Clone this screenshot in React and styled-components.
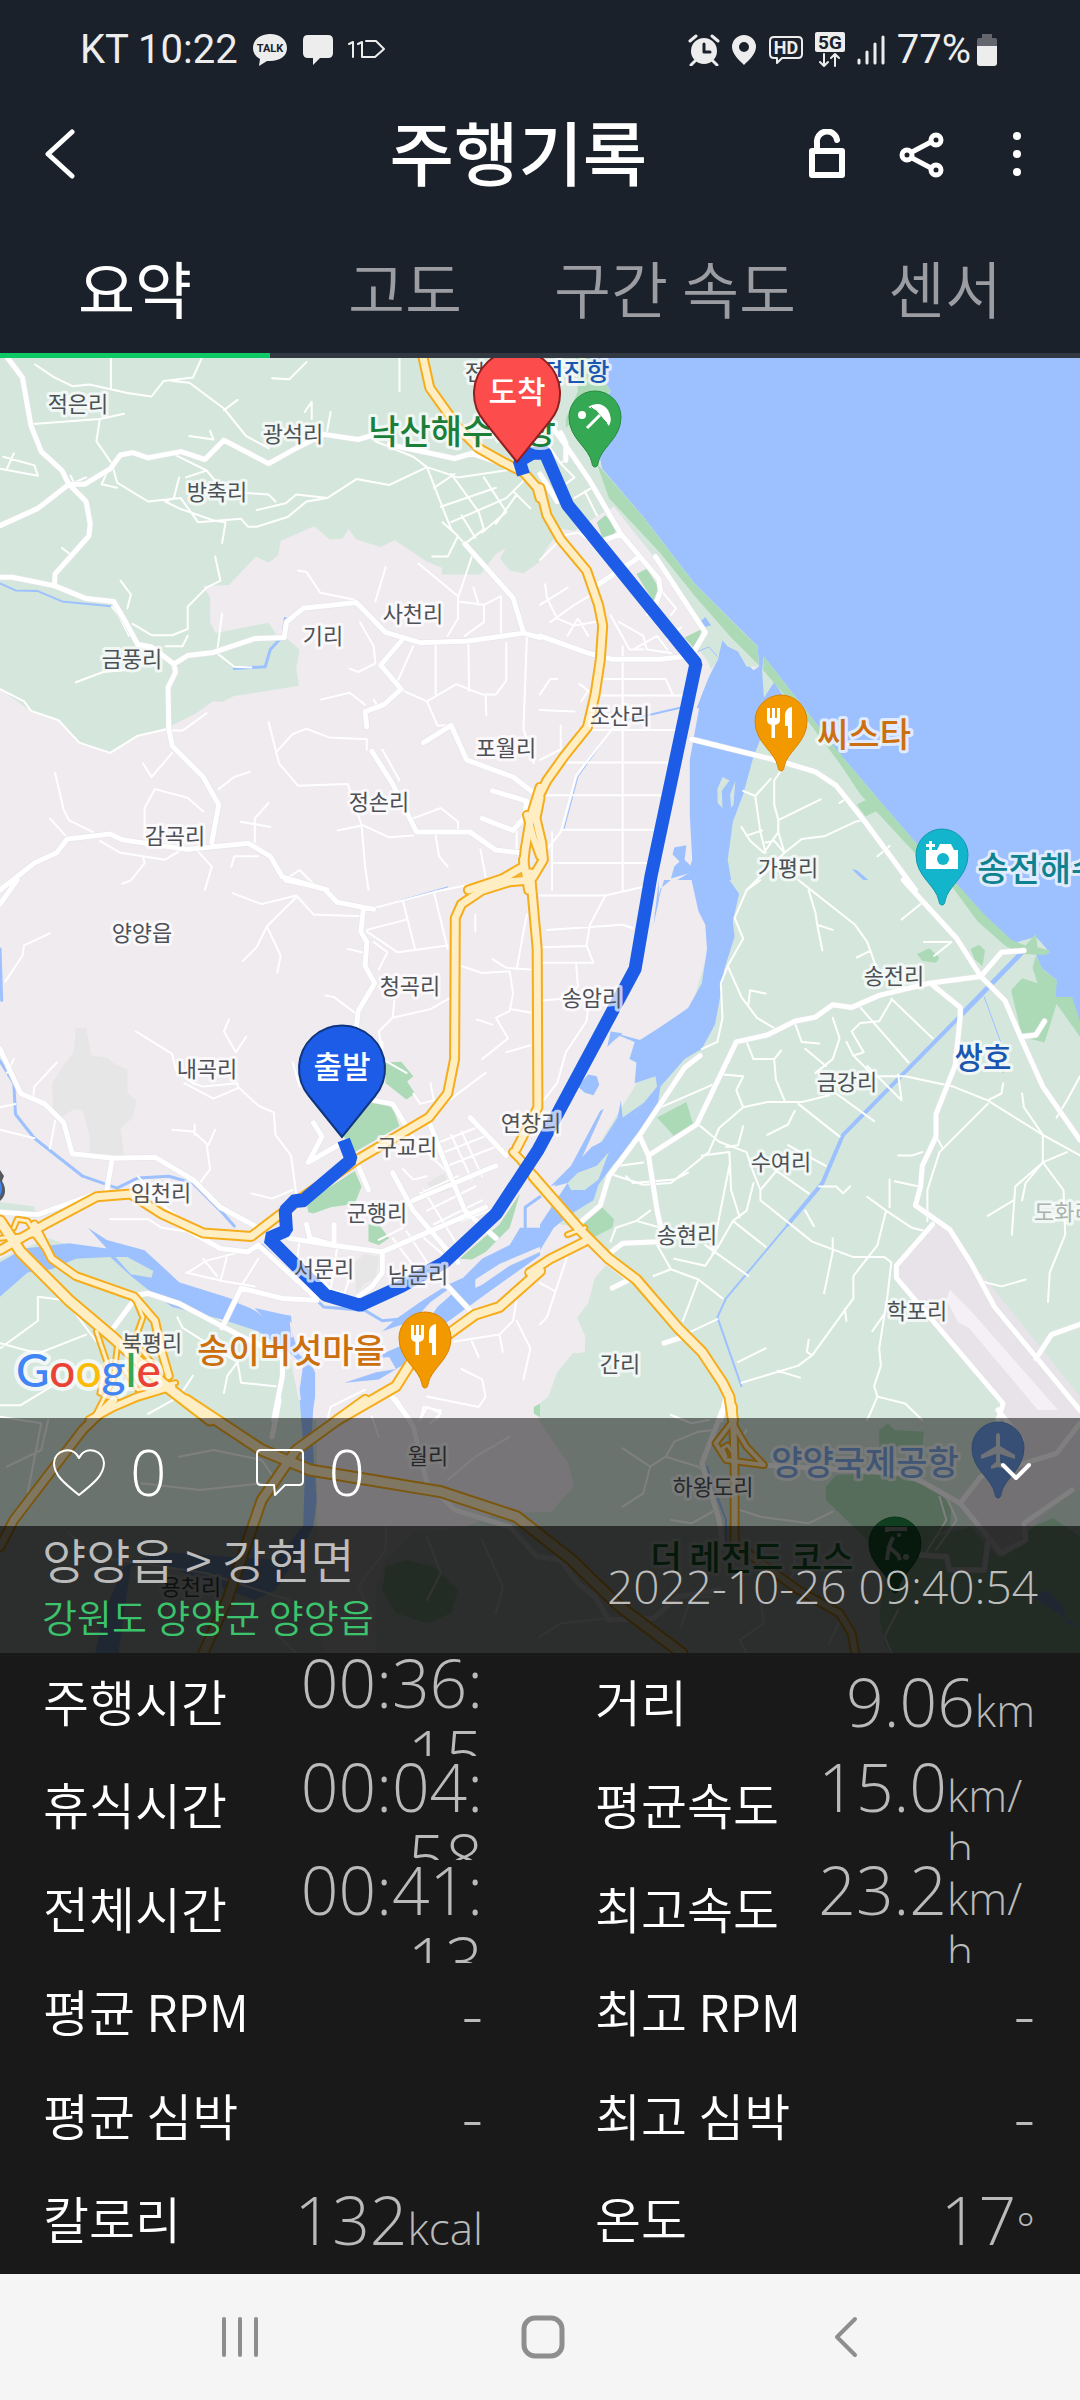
import React from "react";
import styled, { createGlobalStyle } from "styled-components";

const GlobalStyle = createGlobalStyle`
  *, *::before, *::after { box-sizing: border-box; }
  body {
    margin: 0;
    background: #191919;
    font-family: "Noto Sans CJK KR", "Noto Sans", sans-serif;
  }
  button { font: inherit; color: inherit; background: none; border: 0; padding: 0; cursor: pointer; }
`;

const DIGITS = `"Open Sans", "Noto Sans CJK KR", sans-serif`;

const Screen = styled.div`
  min-height: 100vh;
  display: flex;
  flex-direction: column;
  color: #fff;
`;

const Header = styled.header`
  background: #1b212b;
`;

const StatusBar = styled.div`
  height: 100px;
  padding: 0 82px 0 80px;
  display: flex;
  align-items: center;
  justify-content: space-between;
  font-family: Roboto, sans-serif;
  font-size: 40px;
  line-height: 48px;
  color: #ededed;
`;

const StatusGroup = styled.div`
  display: flex;
  align-items: center;
  gap: ${(p) => p.$gap}px;
`;

const TitleBar = styled.div`
  height: 108px;
  display: grid;
  grid-template-columns: 24% 1fr 28%;
  align-items: center;
`;

const Title = styled.h1`
  margin: 0;
  padding-bottom: 6px;
  text-align: center;
  font-size: 70px;
  font-weight: 500;
  line-height: 96px;
  white-space: nowrap;
`;

const IconButton = styled.button`
  width: ${(p) => p.$width}px;
  height: 96px;
  display: grid;
  place-items: center;
`;

const Actions = styled.div`
  display: flex;
  justify-content: flex-end;
  padding-right: 16px;
`;

const Tabs = styled.nav`
  display: grid;
  grid-template-columns: repeat(4, 1fr);
`;

const Tab = styled.button`
  && {
    height: 150px;
    padding-top: 12px;
    font-size: 62px;
    font-weight: ${(p) => (p.$active ? 400 : 350)};
    line-height: 80px;
    white-space: nowrap;
    color: ${(p) => (p.$active ? "#fff" : "#9b9da2")};
    border-bottom: 5px solid ${(p) => (p.$active ? "#0ec965" : "#323842")};
  }
`;

const MapArea = styled.section`
  position: relative;
  display: flex;
  flex-direction: column;
  background: #d5e7dd;
`;

const MapDrawing = styled.svg`
  display: block;
  width: 100%;
  height: auto;
`;

const MapFooter = styled.div`
  position: absolute;
  left: 0;
  right: 0;
  bottom: 0;
`;

const SocialBar = styled.div`
  height: 108px;
  padding: 0 36px 0 52px;
  display: flex;
  align-items: center;
  justify-content: space-between;
  background: rgba(0, 0, 0, 0.5);
`;

const SocialGroup = styled.div`
  display: flex;
  gap: 88px;
`;

const SocialButton = styled.button`
  && {
    display: flex;
    align-items: center;
    gap: 24px;
    font-family: ${DIGITS};
    font-size: 64px;
    font-weight: 300;
    line-height: 72px;
  }
`;

const RideBar = styled.div`
  height: 127px;
  padding: 0 42px 8px;
  display: flex;
  align-items: center;
  justify-content: space-between;
  background: rgba(0, 0, 0, 0.8);
`;

const RideName = styled.div`
  font-size: 48px;
  font-weight: 350;
  line-height: 60px;
  color: #bcbcbc;
`;

const RidePlace = styled.div`
  font-size: 38px;
  font-weight: 350;
  line-height: 56px;
  color: #3cc46c;
`;

const RideDate = styled.time`
  font-family: ${DIGITS};
  font-size: 46px;
  font-weight: 300;
  color: #bcbcbc;
`;

const Stats = styled.dl`
  flex: 1;
  margin: 0;
  padding: 0 45px 0 43px;
  display: grid;
  grid-template-columns: 1fr 1fr;
  column-gap: 112px;
  align-content: space-between;
  background: #191919;
`;

const Stat = styled.div`
  height: 103px;
  display: flex;
  align-items: center;
  justify-content: space-between;
  overflow: hidden;
`;

const StatLabel = styled.dt`
  padding-bottom: 10px;
  font-size: 50px;
  font-weight: 350;
  line-height: 72px;
  white-space: nowrap;
`;

const StatValue = styled.dd`
  margin: -6px 0 0;
  display: flex;
  align-items: baseline;
  align-self: ${(p) => (p.$wraps ? "flex-start" : "center")};
  font-family: ${DIGITS};
  font-weight: 300;
  color: #bababa;
`;

const Amount = styled.span`
  flex-shrink: 0;
  max-width: 200px;
  font-size: 66px;
  line-height: 71px;
  text-align: right;
  overflow-wrap: anywhere;
`;

const Unit = styled.span`
  max-width: 88px;
  font-size: 44px;
  line-height: 53px;
  overflow-wrap: anywhere;
`;

const SystemNav = styled.nav`
  height: 126px;
  padding: 0 82px 0 88px;
  display: grid;
  grid-template-columns: repeat(3, 1fr);
  background: #f5f5f5;
`;

const SystemButton = styled.button`
  display: grid;
  place-items: center;
`;

/* ---------- map data ---------- */

const K = 0.34439;
const SHEETS = {
  nw: [0, 350, K, K],
  ne: [540, 350, K, K],
  sw: [0, 880, K, K],
  se: [540, 880, K, K],
  s: [0, 1400, 0.68878, 1 / 3],
  sr: [540, 1410, K, 1 / 3],
};

const project = (sheet, points, close) => {
  const [ox, oy, sx, sy] = SHEETS[sheet];
  const d = points
    .trim()
    .split(/\s+/)
    .map((pair) => {
      const [x, y] = pair.split(",").map(Number);
      return `${(ox + x * sx).toFixed(1)} ${(oy + y * sy).toFixed(1)}`;
    })
    .join("L");
  return `M${d}${close ? "Z" : ""}`;
};

const LAND = "#efebef";
const MEADOW = "#d5e7dd";
const PARK = "#acdab6";
const WATER = "#9dc1ff";
const GREY = "#e6e6e6";
const APRON = "#e7e3e8";

const AREAS = [
  [MEADOW, "nw", "0,20 1568,20 1568,615 1520,648 1480,640 1452,605 1468,575 1440,592 1395,652 1283,652 1283,632 1240,615 1146,552 1105,572 1035,550 1012,520 995,548 958,550 912,512 815,555 808,595 780,618 743,600 665,682 590,685 610,718 610,790 625,822 780,792 815,845 830,835 870,870 860,925 868,975 680,1005 645,1022 618,1020 570,1055 490,1095 400,1120 320,1170 230,1140 170,1075 85,1045 0,985"],
  [WATER, "ne", "0,20 1568,20 1568,1568 0,1568"],
  [LAND, "ne", "0,20 140,20 205,120 150,200 180,345 300,485 450,680 600,830 632,860 635,920 620,930 590,900 575,875 545,860 530,842 520,850 518,895 490,950 470,1000 455,1040 462,1040 435,1190 435,1350 442,1480 430,1520 350,1568 0,1568"],
  [MEADOW, "ne", "0,20 140,20 205,120 150,200 180,345 300,485 450,680 632,860 635,920 600,920 575,875 545,860 530,842 516,900 497,928 485,900 460,870 475,815 440,760 330,600 215,455 170,480 100,525 60,520 20,575 0,610"],
  [PARK, "ne", "165,330 300,485 450,680 600,830 632,860 635,915 555,835 450,715 350,590 200,430"],
  [PARK, "ne", "105,20 140,20 205,120 150,170 75,225 75,200 110,120"],
  [PARK, "ne", "280,650 310,635 345,690 330,730"],
  [PARK, "ne", "420,835 470,810 450,870"],
  [PARK, "ne", "165,500 190,480 225,520 210,540 185,555"],
  [MEADOW, "ne", "650,890 760,1030 860,1160 970,1290 1090,1430 1230,1568 560,1568 545,1480 560,1370 590,1290 620,1180 640,1130 710,1010 680,965 650,1010 645,930"],
  [PARK, "ne", "650,890 760,1030 860,1160 970,1290 1090,1430 1230,1568 1190,1568 1060,1430 930,1290 870,1200 780,1080 700,990 648,930"],
  [PARK, "ne", "920,1320 960,1300 985,1335 945,1355"],
  [WATER, "ne", "640,1060 660,1010 700,1000 700,1080 650,1120"],
  [MEADOW, "ne", "515,1275 530,1240 550,1250 528,1280 530,1330 516,1315"],
  [MEADOW, "ne", "555,1330 552,1290 567,1252 562,1320"],
  [WATER, "ne", "465,790 480,775 497,800 475,805"],
  [WATER, "ne", "905,1508 920,1510 960,1545 950,1550"],
  [WATER, "ne", "390,1445 425,1438 420,1480 440,1500 430,1520 380,1535 390,1500 405,1485 385,1465"],

  [LAND, "se", "0,0 490,0 490,200 440,370 300,560 150,800 30,950 60,1000 130,1010 200,1110 160,1155 140,1230 108,1272 132,1325 130,1372 95,1375 50,1430 25,1500 0,1520"],
  [MEADOW, "se", "450,0 1568,0 1568,1568 0,1568 0,1520 25,1500 50,1430 95,1375 130,1372 132,1325 108,1272 140,1230 160,1155 200,1110 100,990 200,850 340,660 470,490 520,300 490,120"],
  [WATER, "se", "360,0 550,0 578,40 560,120 565,165 535,260 525,330 508,420 470,490 420,520 350,600 340,660 290,740 210,830 170,885 155,930 90,970 40,1010 0,1075 0,1000 80,880 40,890 150,775 180,760 275,680 340,600 335,570 275,590 280,530 260,520 275,470 200,440 290,465 345,430 430,372 470,300 485,200 480,130 460,90 440,0 380,0 350,25 330,110"],
  [WATER, "se", "345,0 330,130 345,60"],
  [WATER, "se", "110,600 140,565 165,570 172,595 155,625 130,618"],
  [WATER, "se", "30,890 90,830 175,670 185,665 120,810 180,760 225,690 235,640 240,690 305,645 240,720 130,850"],
  [WATER, "se", "195,485 205,440 240,445 210,470"],
  [MEADOW, "se", "80,880 110,850 165,830 200,790 170,870 130,900 90,900"],
  [WATER, "se", "1195,0 1568,0 1568,410 1530,395 1495,340 1500,290 1455,255 1440,215 1480,210 1440,165 1370,185 1280,100"],
  [PARK, "se", "1190,10 1210,10 1290,100 1370,175 1410,190 1440,155 1445,195 1480,205 1470,218 1400,215 1350,190 1270,120"],
  [PARK, "se", "1368,320 1400,285 1445,300 1430,255 1440,220 1460,260 1500,290 1498,340 1545,340 1568,410 1568,455 1500,360 1465,472 1400,455"],
  [PARK, "se", "340,690 425,645 445,710 390,745"],
  [PARK, "se", "125,1000 180,950 215,985 210,1010 150,1040"],
  [PARK, "se", "1095,215 1130,198 1160,225 1150,240 1110,235"],
  [PARK, "se", "1250,200 1275,188 1292,205 1285,250 1262,230"],
  [APRON, "se", "1140,1000 1180,1005 1230,1080 1568,1500 1568,1568 1370,1568 1340,1510 1035,1150 1040,1115"],
  ["#f5f0f5", "se", "1190,1190 1180,1220 1215,1285 1245,1300 1470,1568 1530,1568 1250,1250"],

  [MEADOW, "sw", "0,935 100,948 100,970 0,968"],
  [MEADOW, "sw", "140,1040 200,1060 310,1070 430,1150 500,1180 640,1280 740,1290 830,1330 880,1568 0,1568 0,1100"],
  [WATER, "sw", "0,1110 70,1070 200,1055 310,1070 255,1010 310,1045 420,1075 490,1140 520,1168 670,1215 740,1250 845,1265 850,1320 870,1380 900,1400 915,1430 915,1500 905,1568 880,1568 870,1480 880,1410 850,1380 750,1310 640,1275 500,1240 430,1190 380,1150 320,1095 220,1100 150,1130 80,1140 0,1210"],
  [MEADOW, "sw", "335,1095 370,1095 445,1135 440,1155 380,1145"],
  [LAND, "sw", "670,1222 735,1245 790,1290 850,1330 850,1290 830,1268 740,1240"],
  [WATER, "sw", "740,1243 840,1265 845,1325 790,1300"],
  [WATER, "sw", "1568,1010 1568,1090 1400,1210 1290,1290 1200,1280 1110,1310 1150,1275 1220,1225 1300,1175 1345,1155 1400,1100 1480,1060 1510,1010"],
  [LAND, "sw", "1380,1160 1450,1115 1568,1065 1568,1080 1480,1120 1400,1175 1380,1185"],
  [LAND, "sw", "1200,1280 1250,1225 1300,1190 1315,1200 1270,1240 1240,1285"],
  [WATER, "sw", "1000,1460 1090,1430 1150,1420 1130,1385 1080,1390 1180,1345 1220,1320 1200,1390 1100,1450"],
  [PARK, "sw", "1118,530 1165,528 1200,570 1182,585 1205,620 1180,637 1120,590"],
  [PARK, "sw", "1030,790 1160,715 1140,660 1080,645 995,740"],
  [PARK, "sw", "895,965 890,935 1030,845 1050,890 1030,940 960,950 910,968"],
  [PARK, "sw", "1070,1000 1100,1000 1130,1040 1100,1060 1070,1050"],
  [PARK, "sw", "1335,1100 1380,1060 1450,1000 1510,910 1480,1010 1410,1080 1370,1102"],
  [PARK, "sw", "1550,1530 1568,1520 1568,1560 1550,1550"],
  [GREY, "sw", "220,430 250,430 265,510 310,515 325,530 370,550 370,620 397,640 385,690 350,720 360,800 260,795 260,740 240,670 215,665 180,688 155,680 152,590 190,530 215,500"],
  [GREY, "sw", "1030,1110 1060,1085 1100,1095 1090,1160 1060,1170 1035,1200"],
  [GREY, "sw", "1240,880 1290,850 1305,900 1255,915"],

  [LAND, "s", "460,50 775,40 825,190 833,260 800,335 720,340 680,378 600,400 560,480 545,560 545,760 470,760 460,378"],
  [WATER, "s", "435,0 455,0 453,100 460,300 455,378 440,440 400,570 370,600 220,480 190,500 180,640 172,760 138,760 150,640 180,500 230,455 400,480 440,378 443,200"],
  [PARK, "s", "560,500 590,480 630,500 665,570 655,640 620,670 575,640 555,570"],
  [PARK, "sr", "830,230 860,195 1050,190 1130,215 1195,290 1190,348 1130,400 1000,430 940,380 900,340 830,270"],
  [PARK, "sr", "985,60 1010,40 1030,60 1115,65 1110,110 985,110"],
  [PARK, "sr", "985,620 1000,500 1100,400 1180,370 1250,350 1330,440 1440,345 1490,325 1568,378 1568,740 1020,740 1000,700"],
  [APRON, "sr", "1340,0 1568,0 1568,240 1540,240 1340,440 1210,270 1270,200 1360,150"],
  [WATER, "sr", "1430,560 1470,540 1520,590 1530,640 1568,650 1520,620 1490,600"],
];

const STREAMS = [
  [2, "nw", "0,678 45,698 110,700 180,730 330,745"],
  [3, "nw", "828,780 822,830 785,870 770,920 680,925"],
  [1, "ne", "460,875 490,862 515,890"],
  [2, "ne", "250,1075 410,1038"],
  [1, "ne", "205,1105 110,1240 70,1390"],
  [3, "sw", "0,525 40,590 45,680 100,750 240,860 340,895 400,865 490,860 560,880 640,960 680,1005"],
  [3, "sw", "0,200 5,350"],
  [1, "sw", "1160,60 1300,20"],
  [3, "sw", "760,1060 940,1240 1060,1250 1110,1280 1165,1275"],
  [3, "sw", "1568,920 1525,950 1525,1020"],
  [5, "se", "1400,210 1220,395"],
  [4, "se", "1220,395 880,740 820,880 720,1000"],
  [2, "se", "720,1000 540,1215 515,1270 585,1470"],
  [1, "se", "1290,340 1345,490 1345,560"],
  [2, "sr", "485,170 500,220 540,330 540,400"],
];

const MAIN_STREETS = [
  ["nw", "20,20 65,80 90,220 120,295 180,350 200,390 250,440 262,505 258,540 160,650 158,685"],
  ["nw", "0,510 110,460 200,390 245,390 320,345 350,305 385,298 430,313 525,295 595,318 650,262 780,330 870,280 940,245 1040,260 1090,245"],
  ["nw", "1130,275 1250,300 1320,315 1370,300 1500,345"],
  ["nw", "0,660 35,660 160,685 250,722 330,730 365,790 400,855 440,862 505,912 545,887 620,878 740,838 825,835 832,790 880,750 1035,733 1120,820 1220,850 1360,845 1520,822 1568,835"],
  ["nw", "505,912 510,935 488,980 490,1100 500,1150 590,1240 635,1320 615,1430"],
  ["nw", "0,1568 100,1490 165,1460 195,1420 320,1405 355,1422 540,1450 720,1432 785,1470 820,1530 950,1568"],
  ["nw", "1350,563 1490,720 1520,820"],
  ["nw", "1165,845 1105,915 1165,985 1115,1030 1060,1050 1065,1095"],
  ["nw", "1080,1165 1140,1260 1210,1400 1365,1400 1440,1452 1510,1460"],
  ["nw", "1230,1140 1310,1090 1355,1190 1490,1240 1555,1290"],
  ["nw", "1430,1280 1530,1310 1520,1360 1490,1395 1400,1360"],
  ["ne", "40,230 70,270 145,380 235,535 345,665 350,700 335,740"],
  ["ne", "0,360 50,440"],
  ["ne", "335,600 480,820 450,870"],
  ["ne", "155,690 290,600"],
  ["ne", "180,555 235,535"],
  ["ne", "0,830 140,880 210,898 350,898 420,890"],
  ["ne", "440,1130 700,1195 800,1225 860,1265 940,1365 1090,1568"],
  ["ne", "75,320 75,270 60,240"],
  ["se", "1055,0 1210,170 1280,280 1350,350 1395,455 1460,600 1568,755"],
  ["se", "1395,455 1440,450 1465,410"],
  ["se", "1405,205 1340,210 1280,280 1130,300 985,335 905,370 850,362 800,398 740,410 660,450 570,470 455,710 315,800"],
  ["se", "1140,305 1220,370 1220,400 1205,540 1150,680 1150,745 1110,830 1105,890 1090,945 1190,1015 1250,1110 1320,1240 1568,1540"],
  ["se", "465,510 420,545 290,740 200,860 175,945 110,1000"],
  ["se", "290,745 315,800 340,960 360,1050 240,1055 200,1085"],
  ["se", "1140,1000 1035,1120 1035,1155 1345,1520 1330,1568"],
  ["se", "195,1110 260,1160 210,1185"],
  ["se", "360,1345 420,1325"],
  ["se", "1568,1290 1485,1320 1440,1390"],
  ["se", "545,1480 525,1568"],
  ["sw", "830,0 940,25 980,65 1085,85"],
  ["sw", "1055,85 1048,150 1065,180 1060,250 1088,300 1040,380 1035,430"],
  ["sw", "0,70 50,0"],
  ["sw", "0,490 60,620 130,650 185,705 210,795 330,808 450,805 560,870 640,950 750,1010"],
  ["sw", "325,815 310,900"],
  ["sw", "0,965 110,972 280,910"],
  ["sw", "1085,640 1140,650 1180,715"],
  ["sw", "910,705 935,745 895,820 990,765"],
  ["sw", "550,1020 640,1070 720,1080 750,1060 920,1215"],
  ["sw", "330,1300 400,1205 430,1200 520,1230 700,1325 820,1380 820,1440 795,1568"],
  ["sw", "645,1300 700,1185 820,1215 920,1220"],
  ["sw", "840,1040 960,1060 1110,1080 1110,1140 1080,1180 1040,1210"],
  ["sw", "1040,830 1070,900"],
  ["sw", "1300,1180 1370,1255"],
  ["sw", "1245,700 1300,840 1350,960 1440,1040"],
  ["sw", "1200,930 1440,830"],
  ["sw", "1140,850 1200,960 1330,1110"],
  ["sw", "1110,1080 1410,950"],
  ["sw", "1365,690 1470,800"],
  ["sw", "890,1000 900,1040 970,1060 970,1000"],
  ["sw", "1130,1490 1190,1568"],
  ["s", "405,0 400,60 395,110"],
  ["s", "575,0 600,80 620,250 660,330 740,380 780,470"],
  ["sr", "0,440 60,450 110,520 160,560 200,630 330,625 400,560 520,540"],
  ["sr", "530,0 470,160 520,330 530,400"],
  ["sr", "640,165 1050,190 1110,215 1220,280 1340,430 1410,390 1405,340 1545,240"],
  ["sr", "1220,280 1280,200 1500,130 1568,40"],
  ["sr", "1330,0 1400,90 1360,160"],
  ["sr", "1105,435 1180,440 1190,480 1290,480 1300,400"],
];

const STREETS = [
  ["nw", "102,42 155,78 210,105 260,100 370,125 440,135 475,90 560,80 585,25"],
  ["nw", "322,25 322,110"],
  ["nw", "95,215 290,200 360,185"],
  ["nw", "290,200 280,265 325,330 340,385 430,440 525,430 575,500 700,490 720,513 745,513 835,485 890,440 950,430 1035,375 1130,392 1240,340"],
  ["nw", "320,335 295,390 340,400"],
  ["nw", "500,90 550,95 650,170 715,250 780,285"],
  ["nw", "650,175 690,145"],
  ["nw", "790,82 840,85 890,35"],
  ["nw", "1160,25 1160,120"],
  ["nw", "960,180 950,235"],
  ["nw", "885,180 905,150 905,200"],
  ["nw", "0,345 110,365 100,335 10,310"],
  ["nw", "20,345 40,300"],
  ["nw", "500,300 600,350 650,410 780,420 800,440"],
  ["nw", "520,370 505,430 480,440 520,460 620,495 655,500 645,560"],
  ["nw", "540,370 600,350"],
  ["nw", "550,250 620,260 610,235"],
  ["nw", "745,465 830,445 860,420 950,430"],
  ["nw", "1090,265 1200,310 1240,340 1330,370 1500,345"],
  ["nw", "1240,340 1290,470 1310,520 1350,563"],
  ["nw", "1310,360 1390,470 1405,520 1350,563"],
  ["nw", "1405,370 1470,470 1400,530"],
  ["nw", "1260,400 1320,360"],
  ["nw", "1280,455 1440,400"],
  ["nw", "1310,500 1470,430 1520,380"],
  ["nw", "1340,480 1380,545"],
  ["nw", "1490,410 1540,460"],
  ["nw", "1440,505 1500,420"],
  ["nw", "1285,500 1330,540 1300,600 1255,600"],
  ["nw", "1370,600 1330,720 1330,780 1300,830"],
  ["nw", "1215,620 1330,715"],
  ["nw", "1330,730 1405,740 1405,790 1350,830"],
  ["nw", "1405,740 1455,715 1455,820"],
  ["nw", "1375,690 1390,740"],
  ["nw", "1265,855 1265,1000"],
  ["nw", "1360,850 1362,990"],
  ["nw", "1470,850 1470,960 1440,1000 1400,1000 1325,970 1240,1020 1160,985"],
  ["nw", "1240,1020 1270,1090 1300,1090"],
  ["nw", "1410,1000 1412,1060"],
  ["nw", "1530,830 1520,1100 1550,1200"],
  ["nw", "1120,630 1090,730"],
  ["nw", "865,640 890,645 930,705 1030,725"],
  ["nw", "1045,790 1085,860 1090,910"],
  ["nw", "1015,925 1040,935 1090,910"],
  ["nw", "1155,960 1200,860"],
  ["nw", "932,1015 1015,995 1060,1030"],
  ["nw", "1085,1015 1100,1040"],
  ["nw", "805,1165 850,1115 890,1100 955,1125 1065,1130 1065,1160"],
  ["nw", "780,1080 800,1160 810,1200 865,1265 1010,1260 1050,1380 1060,1500 1070,1568"],
  ["nw", "980,1395 1055,1380 1130,1415 1200,1410"],
  ["nw", "1110,1160 1160,1250"],
  ["nw", "1200,1360 1280,1330 1330,1370 1330,1400"],
  ["nw", "1265,1410 1275,1470 1300,1500"],
  ["nw", "1395,1450 1410,1530"],
  ["nw", "600,1055 530,1105 500,1105"],
  ["nw", "0,985 70,1020 90,1048 170,1075 230,1140 320,1170 400,1120 490,1100"],
  ["nw", "220,965 300,935 360,930"],
  ["nw", "385,795 440,828 500,828 545,810 545,745 600,690 640,670 625,600"],
  ["nw", "480,860 530,860 545,830"],
  ["nw", "350,670 380,710 370,750"],
  ["nw", "325,745 345,770 375,830"],
  ["nw", "645,765 630,880 680,920 730,922"],
  ["nw", "160,1228 185,1335 200,1365 270,1400"],
  ["nw", "420,1410 420,1330 450,1275 545,1300 590,1340"],
  ["nw", "635,1275 680,1240 725,1225"],
  ["nw", "145,1360 190,1410"],
  ["nw", "780,1315 740,1360 740,1430"],
  ["nw", "290,1425 350,1460 480,1480 520,1455"],
  ["nw", "570,1450 615,1500 595,1568"],
  ["nw", "415,1470 420,1490 380,1540 355,1550"],
  ["nw", "700,1370 785,1385"],
  ["nw", "672,1500 680,1470 750,1470"],
  ["nw", "840,1530 870,1510 910,1550"],
  ["nw", "1500,1370 1500,1460"],
  ["nw", "415,1200 440,1240 500,1170"],
  ["nw", "180,575 200,590"],
  ["nw", "205,365 215,385 250,370"],
  ["ne", "20,270 60,330 100,370 60,400"],
  ["ne", "60,330 80,310"],
  ["ne", "0,360 45,420"],
  ["ne", "100,430 150,400"],
  ["ne", "130,410 165,480"],
  ["ne", "60,540 110,530 155,560"],
  ["ne", "0,610 60,550"],
  ["ne", "15,680 20,720 50,780 100,800 160,790"],
  ["ne", "0,740 80,690"],
  ["ne", "30,790 100,740 150,710"],
  ["ne", "80,830 110,780 140,830"],
  ["ne", "205,770 260,870 300,870"],
  ["ne", "230,790 300,830 310,870 380,880"],
  ["ne", "310,770 330,730"],
  ["ne", "370,870 340,830 270,870"],
  ["ne", "345,690 395,750 380,770"],
  ["ne", "410,805 370,840"],
  ["ne", "240,860 240,1568"],
  ["ne", "180,955 365,955 385,1000"],
  ["ne", "170,1003 420,1003"],
  ["ne", "110,1103 400,1103"],
  ["ne", "75,1198 400,1198"],
  ["ne", "20,1293 375,1293"],
  ["ne", "60,1393 340,1393"],
  ["ne", "35,1490 330,1490"],
  ["ne", "210,1100 105,1235 60,1400 20,1450"],
  ["ne", "0,1045 100,1050"],
  ["ne", "0,1000 30,955 50,955"],
  ["ne", "115,970 140,990 120,1020"],
  ["ne", "0,1190 60,1160 60,1090"],
  ["ne", "35,1400 35,1568"],
  ["ne", "700,1220 680,1250 680,1320 692,1365 692,1400 650,1460"],
  ["ne", "590,1280 625,1295 670,1245"],
  ["ne", "625,1295 640,1400 655,1460"],
  ["ne", "692,1365 815,1305"],
  ["ne", "585,1385 610,1425 650,1460"],
  ["ne", "692,1400 710,1460 760,1420 825,1412 915,1370 940,1365"],
  ["ne", "600,1410 645,1395"],
  ["ne", "655,1430 680,1425 710,1460 600,1568"],
  ["ne", "980,1470 1015,1440"],
  ["ne", "870,1315 895,1300"],
  ["se", "640,0 600,30 565,110 590,170 545,250 525,300 530,400 515,470 470,490"],
  ["se", "750,0 915,130 950,180 975,250"],
  ["se", "780,30 800,95 805,130 820,205"],
  ["se", "805,130 850,145"],
  ["se", "920,225 960,205"],
  ["se", "545,250 585,340 630,400 680,430"],
  ["se", "605,360 610,320 655,330"],
  ["se", "1050,115 1105,70"],
  ["se", "1115,180 1195,180 1145,220"],
  ["se", "1020,345 1140,460"],
  ["se", "930,370 1070,530"],
  ["se", "1020,350 985,410 930,415 905,440 940,500 910,510 890,470"],
  ["se", "740,415 760,470 810,475"],
  ["se", "850,400 870,460 850,520 800,560"],
  ["se", "600,470 620,520 680,520 700,495"],
  ["se", "680,520 685,580 710,640"],
  ["se", "530,565 590,570 570,610 590,660"],
  ["se", "770,490 830,540"],
  ["se", "910,510 970,570 1060,570 1200,600 1300,640 1460,740 1568,800"],
  ["se", "1300,640 1340,620 1345,590"],
  ["se", "1300,650 1160,790 1125,900 1125,990"],
  ["se", "1150,745 1170,780"],
  ["se", "1040,800 1080,800 1110,790"],
  ["se", "1400,620 1405,660 1460,740 1460,820 1410,880 1400,930"],
  ["se", "1460,820 1520,900 1525,1030 1480,1140 1475,1225"],
  ["se", "1460,820 1380,890 1370,1030"],
  ["se", "1375,930 1300,975"],
  ["se", "1460,820 1530,790"],
  ["se", "1500,690 1530,640 1568,570"],
  ["se", "840,625 760,645 660,645 590,660 520,720 490,790 380,880 300,885 210,855"],
  ["se", "350,660 500,595"],
  ["se", "460,710 520,760 600,790 620,850 640,900 640,930 790,1050 910,1095 1000,1095 1020,1110 1010,1200 985,1360 990,1410 970,1470 980,1500 950,1568"],
  ["se", "750,650 870,745"],
  ["se", "740,670 720,710 660,740"],
  ["se", "860,620 970,700"],
  ["se", "1040,565 1050,640 950,540"],
  ["se", "550,790 555,900 580,980"],
  ["se", "550,790 470,800"],
  ["se", "590,715 575,770 540,775"],
  ["se", "620,880 600,960 560,990 520,1060 480,1120"],
  ["se", "560,990 655,1065"],
  ["se", "680,840 780,910"],
  ["se", "720,770 830,830"],
  ["se", "640,900 690,840"],
  ["se", "550,830 520,980 500,1090"],
  ["se", "810,890 860,890 880,910 900,890"],
  ["se", "770,960 795,1005"],
  ["se", "950,920 1005,960 980,1060 910,1150 910,1215 790,1380 750,1410 585,1460"],
  ["se", "1005,960 1080,1010 1120,1020"],
  ["se", "1015,870 1015,950"],
  ["se", "850,1040 850,1080 825,1200"],
  ["se", "1030,875 1100,890"],
  ["se", "340,1060 380,1130 460,1160 530,1215"],
  ["se", "460,1160 415,1280"],
  ["se", "480,1060 605,1150"],
  ["se", "330,1150 380,1130"],
  ["se", "390,1100 480,1120"],
  ["se", "205,1050 220,1010 280,990 320,960"],
  ["se", "280,990 350,1010"],
  ["se", "250,860 270,880 390,870 430,850"],
  ["se", "230,830 300,820"],
  ["se", "420,1320 515,1275"],
  ["se", "575,1400 655,1360"],
  ["se", "780,1335 775,1370 790,1380"],
  ["se", "885,1245 890,1280"],
  ["se", "690,1425 755,1445"],
  ["se", "1000,1260 965,1310"],
  ["se", "980,1500 1060,1520 1110,1568"],
  ["se", "1280,1165 1340,1180 1410,1160"],
  ["se", "0,45 190,45 320,15"],
  ["se", "190,45 145,130 135,190 155,240 0,240"],
  ["se", "20,145 240,130 270,140"],
  ["se", "0,195 135,192"],
  ["se", "0,350 70,345 110,310 105,245"],
  ["se", "140,370 135,410 75,500 50,590 10,640"],
  ["se", "0,1170 45,1195 20,1270 0,1290"],
  ["se", "80,1090 45,1195"],
  ["sw", "145,155 70,190 65,220 15,295"],
  ["sw", "675,38 760,70 860,45 910,100 1050,105"],
  ["sw", "860,50 775,135 745,195 705,235"],
  ["sw", "775,135 815,220 805,270"],
  ["sw", "1090,80 1260,35 1380,10"],
  ["sw", "1170,60 1205,200"],
  ["sw", "1260,35 1300,200"],
  ["sw", "1065,145 1180,115"],
  ["sw", "1065,150 1155,210 1300,190"],
  ["sw", "1085,180 1125,210 1100,260"],
  ["sw", "1010,200 1050,210"],
  ["sw", "945,335 970,340 1030,385"],
  ["sw", "1145,350 1140,400 1250,375 1310,340"],
  ["sw", "1140,400 1100,440 1110,500"],
  ["sw", "1380,100 1380,150"],
  ["sw", "1340,250 1400,270 1480,265"],
  ["sw", "1430,230 1470,255 1540,260"],
  ["sw", "1480,265 1490,330 1480,380 1440,400 1475,460 1400,520"],
  ["sw", "1385,405 1430,420"],
  ["sw", "1480,375 1540,385"],
  ["sw", "1530,100 1520,150 1500,260"],
  ["sw", "1470,500 1540,480"],
  ["sw", "395,440 500,505 510,550 560,590 590,600 690,590 690,600 750,655 795,675 800,740 845,800 860,910"],
  ["sw", "535,590 620,635 690,605"],
  ["sw", "665,405 650,440 685,500 715,455"],
  ["sw", "500,725 560,730 600,765 610,840 580,880"],
  ["sw", "625,725 605,770"],
  ["sw", "565,710 565,740"],
  ["sw", "165,530 100,600 95,640"],
  ["sw", "160,700 145,780"],
  ["sw", "40,520 20,560"],
  ["sw", "0,725 100,750"],
  ["sw", "0,660 45,650"],
  ["sw", "850,530 870,600"],
  ["sw", "730,910 790,925 850,900"],
  ["sw", "320,985 430,985 470,1010 540,1020"],
  ["sw", "400,860 480,950 550,1000"],
  ["sw", "545,1140 600,1105 740,1070"],
  ["sw", "540,1140 650,1165 740,1180"],
  ["sw", "590,1100 630,1150"],
  ["sw", "660,1090 640,1165"],
  ["sw", "750,1100 700,1180"],
  ["sw", "110,1210 110,1280 0,1360"],
  ["sw", "0,1345 110,1375 250,1320"],
  ["sw", "110,1210 190,1220 280,1340"],
  ["sw", "515,1270 530,1300 640,1370 690,1400 700,1460 800,1470"],
  ["sw", "690,1400 660,1440 650,1490"],
  ["sw", "430,1550 520,1500 560,1440"],
  ["sw", "0,1525 60,1525 150,1470"],
  ["sw", "870,1040 860,1130 930,1150"],
  ["sw", "930,1150 960,1190 980,1060"],
  ["sw", "960,1190 1000,1200 1020,1140"],
  ["sw", "1170,840 1200,870 1240,860"],
  ["sw", "1180,720 1240,790 1300,850"],
  ["sw", "1280,760 1380,720"],
  ["sw", "1290,790 1420,740"],
  ["sw", "1300,830 1450,770"],
  ["sw", "1310,740 1370,870"],
  ["sw", "1340,730 1400,860"],
  ["sw", "1220,910 1330,860"],
  ["sw", "1240,960 1380,890"],
  ["sw", "1260,1000 1400,930"],
  ["sw", "1340,990 1420,960"],
  ["sw", "1230,900 1340,1080"],
  ["sw", "1180,1020 1240,1110"],
  ["sw", "1140,1040 1200,1120"],
  ["sw", "1100,1045 1170,1010"],
  ["sw", "1220,1030 1290,1090"],
  ["sw", "1200,620 1220,650 1260,640 1250,590"],
  ["sw", "1290,650 1410,560"],
  ["sw", "1110,470 1110,520 1180,560"],
  ["sw", "950,1568 960,1530 1060,1480"],
  ["sw", "1240,1500 1390,1530 1410,1500 1400,1450 1340,1420"],
  ["sw", "1370,1340 1390,1385"],
  ["sw", "1320,1340 1450,1320 1460,1370"],
  ["sw", "1450,1320 1490,1280 1500,1220"],
  ["sw", "1500,1280 1540,1360 1520,1450"],
  ["sw", "1220,1568 1230,1530 1280,1540 1270,1568"],
  ["s", "0,50 60,70 40,280"],
  ["s", "70,60 60,150 10,200"],
  ["s", "260,170 310,150 380,180 400,240"],
  ["s", "205,250 290,270 380,250"],
  ["s", "610,60 620,20 640,40 625,70"],
  ["s", "650,240 690,170 740,110"],
  ["s", "540,50 550,110"],
  ["s", "100,400 140,470 300,520 420,600 400,700 430,760"],
  ["s", "560,380 560,450 520,560 540,650"],
  ["s", "620,410 640,520 620,600"],
  ["s", "700,420 730,560 720,640"],
  ["sr", "240,115 320,170 365,140 460,170 480,190"],
  ["sr", "365,140 390,95 460,65 500,60"],
  ["sr", "380,15 440,40 490,30"],
  ["sr", "320,170 300,250 240,290"],
  ["sr", "380,330 440,340 510,300"],
  ["sr", "580,300 640,320 780,340 850,305"],
  ["sr", "600,60 580,90"],
  ["sr", "0,680 60,640 200,625"],
  ["sr", "640,570 650,640 580,690 600,728"],
  ["sr", "740,430 740,480 720,520"],
  ["sr", "1120,430 1180,330 1160,260"],
  ["sr", "1150,420 1210,330 1180,260"],
  ["sr", "1040,600 1000,680 1020,728"],
  ["sr", "840,700 880,610"],
  ["sr", "410,650 440,560 500,560"],
];

const HIGHWAYS = [
  [9, "nw", "1228,20 1248,110 1330,225 1390,285 1460,325 1520,355 1560,400 1568,430"],
  [9, "ne", "0,400 20,480 60,550 135,640 170,740 182,800 175,900 160,1000 138,1095 70,1180 20,1250 0,1290"],
  [9, "nw", "1568,1270 1540,1360 1525,1450 1520,1500 1460,1535 1360,1568"],
  [8, "nw", "1530,1350 1550,1420 1568,1470"],
  [9, "ne", "0,1300 -12,1360 5,1430 10,1480 -20,1530"],
  [9, "nw", "1520,1480 1535,1568"],
  [9, "sw", "1540,-20 1560,200 1562,660 1500,780"],
  [9, "sw", "1540,0 1480,5 1400,30 1340,70 1322,110 1320,520 1300,620 1245,690 1040,810 880,920 730,1035 590,1025 470,970 380,912 280,920 130,1000 0,1075"],
  [5, "sw", "40,1010 50,985 80,990 130,1070 100,1030 0,1040"],
  [11, "sw", "0,990 60,1080 200,1220 330,1330 470,1460 610,1568"],
  [8, "sw", "100,1000 150,1100 220,1150 390,1210 450,1280 470,1370 490,1440"],
  [5, "sw", "390,1210 415,1270 390,1340 440,1400"],
  [5, "sw", "280,1310 310,1400 290,1490"],
  [5, "sw", "340,1360 330,1450 270,1568"],
  [5, "sw", "360,1420 400,1480 510,1460"],
  [8, "sw", "500,1470 400,1500 330,1530 260,1568"],
  [8, "sw", "1490,790 1510,810 1568,880"],
  [10, "se", "-20,860 120,1020 200,1100 280,1160 400,1300 470,1370 530,1460 550,1500 560,1568"],
  [9, "se", "130,1050 30,1100 -30,1140"],
  [5, "se", "80,1030 130,1010"],
  [10, "sw", "1568,1135 1450,1240 1380,1262 1300,1320 1200,1390 1150,1470 980,1568"],
  [10, "s", "530,0 430,150 380,300 330,600 295,760"],
  [11, "s", "270,0 380,150 450,210 640,275 750,350 830,480 900,620 990,760"],
  [9, "s", "165,0 120,90 20,360 0,440"],
  [8, "sr", "560,-10 565,170 565,400"],
  [6, "sr", "555,40 510,100 540,150 650,165 600,110 560,40"],
  [5, "sr", "540,140 530,115 545,105 560,130"],
  [8, "sr", "565,400 630,450 750,540 870,610 905,670 915,728"],
];

const ROUTE_PATH = [
  project("nw", "1520,362 1508,322 1545,300 1583,300"),
  project("ne", "0,285 15,300 80,450 453,910").replace("M", "L"),
  project("se", "322,-10 276,258").replace("M", "L"),
  project("sw", "1562,785 1440,970 1290,1110 1165,1180 1045,1235 945,1205 780,1040 832,1018 828,960 860,927 875,935 1020,812 998,755").replace("M", "L"),
].join("");

const VILLAGES = [
  ["적은리", 78, 404], ["광석리", 293, 434], ["방축리", 217, 492], ["사천리", 413, 614],
  ["기리", 323, 636], ["금풍리", 132, 659], ["포월리", 506, 748], ["정손리", 379, 802],
  ["감곡리", 175, 836], ["조산리", 620, 716], ["가평리", 788, 868], ["양양읍", 142, 933],
  ["청곡리", 410, 986], ["내곡리", 207, 1069], ["구교리", 407, 1147], ["연창리", 531, 1123],
  ["임천리", 161, 1193], ["군행리", 377, 1213], ["서문리", 324, 1269], ["남문리", 418, 1275],
  ["북평리", 152, 1343], ["송암리", 592, 998], ["송전리", 894, 976], ["금강리", 847, 1082],
  ["수여리", 781, 1162], ["송현리", 687, 1235], ["간리", 620, 1364], ["학포리", 917, 1311],
  ["월리", 428, 1456], ["하왕도리", 713, 1487], ["용천리", 191, 1587], ["전진리", 495, 372],
];

const PLACES = [
  ["낙산해수욕장", 462, 431, 34, "#1b7f3a"],
  ["전진항", 575, 372, 25, "#1b57b0"],
  ["씨스타", 864, 734, 34, "#cc6f0f"],
  ["송전해수욕장", 1071, 868, 34, "#0f828f"],
  ["쌍호", 983, 1058, 31, "#1b57b0"],
  ["송이버섯마을", 291, 1350, 34, "#cc6f0f"],
  ["양양국제공항", 865, 1462, 34, "#82aceb"],
  ["더 레전드 코스", 752, 1557, 34, "#1b7f3a"],
];

const PIN = "M0 50C-2 50-3 48-3 46C-6 30-26 22-26 0A26 26 0 0 1 26 0C26 22 6 30 3 46C3 48 2 50 0 50Z";
const BIG_PIN = "M0 69L-33 28A43 43 0 1 1 33 28Z";

const Fork = () => (
  <g fill="#fff">
    <path d="M-14-13h3v10h2v-10h3v10h2v-10h3v12q0 4-5 5v13h-3.500v-13q-4.500-1-4.500-5z" />
    <path d="M11-14v31h-4v-12h-3v-12q1-6 7-7z" />
  </g>
);

const POIS = [
  [595, 417, "#34a853", "#268a41", (
    <g key="beach" fill="#fff">
      <circle cx="-13" cy="-2" r="4" />
      <path d="M-7-10q12-7 20 3q5 9 1 16l-7-9l-6-7z" />
      <path d="M-4-10l16 16" stroke="#34a853" strokeWidth="1" fill="none" />
      <path d="M-8 11L5-2" stroke="#fff" strokeWidth="3" />
    </g>
  )],
  [781, 721, "#f29900", "#d98200", <Fork key="food" />],
  [942, 855, "#12b5cb", "#1399ab", (
    <g key="photo">
      <path fill="#fff" d="M-16-5h11l3-6h11l3 6h4v19h-32zM-13-14h3v3h3v3h-3v3h-3v-3h-3v-3h3z" />
      <circle cx="1" cy="4" r="6" fill="#12b5cb" />
    </g>
  )],
  [425, 1338, "#f29900", "#d98200", <Fork key="food" />],
  [998, 1448, "#6f9fe8", "#6292df", (
    <path key="plane" fill="#dfe6ee" d="M-2-13q2-4 4 0v11l15 9v4l-15-5v8l5 4v3l-7-2l-7 2v-3l5-4v-8l-15 5v-4l15-9z" />
  )],
  [895, 1543, "#1e7f3c", "#186a31", (
    <g key="golf" fill="none" stroke="#cfe0d4" strokeWidth="4">
      <path d="M-8-11V-14H12M-2-6L-6 4L3 12L5 17M-6 4L-8 17" />
      <circle cx="4" cy="-8" r="2" fill="#cfe0d4" stroke="none" />
      <circle cx="11" cy="14" r="3" fill="#cfe0d4" stroke="none" />
    </g>
  )],
];

const Lines = ({ lines, width, color }) => (
  <path
    d={lines.map(([sheet, points]) => project(sheet, points)).join("")}
    fill="none"
    stroke={color}
    strokeWidth={width}
    strokeLinecap="round"
    strokeLinejoin="round"
  />
);

const RideMap = () => (
  <MapDrawing viewBox="0 358 1080 1295" role="img" aria-label="주행 경로 지도">
    <rect y="358" width="1080" height="1295" fill={MEADOW} />
    <rect y="358" width="540" height="522" fill={LAND} />
    <rect y="875" width="540" height="545" fill={LAND} />
    {AREAS.map(([fill, sheet, points], i) => (
      <path key={i} d={project(sheet, points, true)} fill={fill} />
    ))}
    {STREAMS.map(([width, sheet, points], i) => (
      <Lines key={i} lines={[[sheet, points]]} width={width} color={WATER} />
    ))}
    <Lines lines={STREETS} width="2" color="#fff" />
    <Lines lines={MAIN_STREETS} width="6" color="#e3e3e8" />
    <Lines lines={MAIN_STREETS} width="5" color="#fff" />
    {HIGHWAYS.map(([width, sheet, points], i) => (
      <Lines key={i} lines={[[sheet, points]]} width={width + 2} color="#f5ad1c" />
    ))}
    {HIGHWAYS.map(([width, sheet, points], i) => (
      <Lines key={i} lines={[[sheet, points]]} width={width - 2} color="#ffeec4" />
    ))}
    <path d={ROUTE_PATH} fill="none" stroke="#1d5ce6" strokeWidth="13" strokeLinejoin="bevel" />
    <path d="M0 1170l4 6l-2 5q7 12-2 20z" fill="#55595f" />
    <path d="M0 1181q4 7 0 15z" fill="#4285f4" />

    <g
      fontFamily='"Noto Sans CJK KR", sans-serif'
      textAnchor="middle"
      paintOrder="stroke"
      stroke="#fff"
      strokeOpacity="0.7"
      strokeWidth="6"
      strokeLinejoin="round"
    >
      {VILLAGES.map(([name, x, y]) => (
        <text key={name} x={x} y={y + 8} fontSize="22" fill="#4d5156">{name}</text>
      ))}
      <text x="1034" y="1220" fontSize="22" fill="#a9b3ae" textAnchor="start">도화리</text>
      {PLACES.map(([name, x, y, size, color]) => (
        <text key={name} x={x} y={y + Math.round(size * 0.37)} fontSize={size} fontWeight="500" fill={color}>
          {name}
        </text>
      ))}
    </g>

    {POIS.map(([x, y, fill, edge, glyph]) => (
      <g key={`${x}-${y}`} transform={`translate(${x} ${y})`}>
        <path d={PIN} fill={fill} stroke={edge} strokeWidth="1" />
        {glyph}
      </g>
    ))}

    <g fontFamily='"Noto Sans CJK KR", sans-serif' fontSize="31" fontWeight="500" textAnchor="middle">
      <g transform="translate(517 393)">
        <path d={BIG_PIN} fill="#fc4c4c" stroke="#8f2020" strokeWidth="2" />
        <text y="10" fill="#fff">도착</text>
      </g>
      <g transform="translate(342 1068)">
        <path d={BIG_PIN} fill="#1d5ce6" stroke="#10357f" strokeWidth="2" />
        <text y="10" fill="#fff">출발</text>
      </g>
    </g>

    <text
      x="16" y="1387" fontFamily="Lato, sans-serif" fontSize="46" fontWeight="500"
      paintOrder="stroke" stroke="#fff" strokeOpacity="0.7" strokeWidth="8" strokeLinejoin="round"
    >
      <tspan fill="#4285f4">G</tspan>
      <tspan fill="#ea4335">o</tspan>
      <tspan fill="#fbbc05">o</tspan>
      <tspan fill="#4285f4">g</tspan>
      <tspan fill="#34a853">l</tspan>
      <tspan fill="#ea4335">e</tspan>
    </text>
  </MapDrawing>
);

/* ---------- icons ---------- */

const Icon = ({ w, h, stroke = "none", fill = "none", width = 5, children }) => (
  <svg
    width={w} height={h} viewBox={`0 0 ${w} ${h}`} fill={fill} stroke={stroke} strokeWidth={width}
    strokeLinecap="round" strokeLinejoin="round" aria-hidden="true"
  >
    {children}
  </svg>
);

const StatusIconsLeft = () => (
  <>
    <Icon w={36} h={34} fill="#ededed">
      <path d="M18 1C8 1 1 7 1 15c0 5 3 9 7 11l-1 7 8-5h3c10 0 17-5 17-13S28 1 18 1z" />
      <text x="18" y="19" textAnchor="middle" fontFamily="Roboto, sans-serif" fontSize="11" fontWeight="700" fill="#1b212b">TALK</text>
    </Icon>
    <Icon w={32} h={34} fill="#ededed">
      <path d="M6 2h20q5 0 5 5v13q0 5-5 5h-8l-7 7v-7H6q-5 0-5-5V7q0-5 5-5z" />
    </Icon>
    <Icon w={38} h={20} stroke="#ededed" width={2}>
      <path d="M1 4l4-2v15M10 4l4-2v15h13l9-8-8-8h-10" />
    </Icon>
  </>
);

const StatusIconsRight = () => (
  <>
    <Icon w={32} h={32} fill="#ededed">
      <circle cx="16" cy="17" r="13" />
      <path d="M16 10v8h6" stroke="#1b212b" strokeWidth="3" fill="none" />
      <path d="M2 7l6-5M30 7l-6-5M7 27l-4 4M25 27l4 4" stroke="#ededed" strokeWidth="3" />
    </Icon>
    <Icon w={26} h={32} fill="#ededed">
      <path fillRule="evenodd" d="M13 1A12 12 0 0 0 1 13c0 7 8 14 12 18c4-4 12-11 12-18A12 12 0 0 0 13 1zm0 7a5 5 0 1 1 0 10a5 5 0 1 1 0-10z" />
    </Icon>
    <Icon w={36} h={30} stroke="#ededed" width={2}>
      <path d="M6 2h24q4 0 4 4v13q0 4-4 4H14l-5 5v-5H6q-4 0-4-4V6q0-4 4-4z" />
      <text x="18" y="19" textAnchor="middle" fontFamily="Roboto, sans-serif" fontSize="18" fontWeight="700" fill="#ededed" stroke="none">HD</text>
    </Icon>
    <Icon w={30} h={36} fill="#ededed">
      <rect x="0" y="0" width="30" height="20" rx="2" />
      <text x="15" y="17" textAnchor="middle" fontFamily="Roboto, sans-serif" fontSize="19" fontWeight="700" fill="#1b212b">5G</text>
      <path d="M9 22v12M5 30l4 4l4-4M20 34V22M16 26l4-4l4 4" fill="none" stroke="#ededed" strokeWidth="2" />
    </Icon>
    <Icon w={30} h={32} stroke="#ededed" width={3}>
      <path d="M3 26v3M11 18v11M19 10v19M27 3v26" />
    </Icon>
  </>
);

const BatteryIcon = () => (
  <Icon w={22} h={34}>
    <path d="M6 1h10v4h3q2 0 2 2v6H1V7q0-2 2-2h3z" fill="#63676d" />
    <path d="M1 13h20v17q0 3-3 3H4q-3 0-3-3z" fill="#ededed" />
  </Icon>
);

/* ---------- page ---------- */

const TABS = ["요약", "고도", "구간 속도", "센서"];

const STATS = [
  { label: "주행시간", amount: "00:36:15", wraps: true },
  { label: "거리", amount: "9.06", unit: "km" },
  { label: "휴식시간", amount: "00:04:58", wraps: true },
  { label: "평균속도", amount: "15.0", unit: "km/h", wraps: true },
  { label: "전체시간", amount: "00:41:13", wraps: true },
  { label: "최고속도", amount: "23.2", unit: "km/h", wraps: true },
  { label: "평균 RPM", amount: "-" },
  { label: "최고 RPM", amount: "-" },
  { label: "평균 심박", amount: "-" },
  { label: "최고 심박", amount: "-" },
  { label: "칼로리", amount: "132", unit: "kcal" },
  { label: "온도", amount: "17", unit: "°" },
];

export default function App() {
  return (
    <Screen>
      <GlobalStyle />
      <Header>
        <StatusBar>
          <StatusGroup $gap={14}>
            <span>KT 10:22</span>
            <StatusIconsLeft />
          </StatusGroup>
          <StatusGroup $gap={11}>
            <StatusIconsRight />
            <StatusGroup $gap={5}>
              <span>77%</span>
              <BatteryIcon />
            </StatusGroup>
          </StatusGroup>
        </StatusBar>
        <TitleBar>
          <IconButton $width={120} aria-label="뒤로">
            <Icon w={32} h={50} stroke="#fff"><path d="M28 3L4 25l24 22" /></Icon>
          </IconButton>
          <Title>주행기록</Title>
          <Actions>
            <IconButton $width={95} aria-label="공개 설정">
              <Icon w={40} h={50} stroke="#fff" width={6}>
                <path d="M5 22h30v24H5zM10 22V14a9 9 0 0 1 20-3" />
              </Icon>
            </IconButton>
            <IconButton $width={95} aria-label="공유">
              <Icon w={48} h={50} stroke="#fff">
                <circle cx="9" cy="26" r="5" />
                <circle cx="38" cy="11" r="5" />
                <circle cx="38" cy="41" r="5" />
                <path d="M14 23l19-10M14 29l19 10" />
              </Icon>
            </IconButton>
            <IconButton $width={95} aria-label="더보기">
              <Icon w={10} h={46} fill="#fff">
                <circle cx="5" cy="5" r="4" />
                <circle cx="5" cy="23" r="4" />
                <circle cx="5" cy="41" r="4" />
              </Icon>
            </IconButton>
          </Actions>
        </TitleBar>
        <Tabs>
          {TABS.map((tab, i) => (
            <Tab key={tab} $active={i === 0}>{tab}</Tab>
          ))}
        </Tabs>
      </Header>

      <MapArea>
        <RideMap />
        <MapFooter>
          <SocialBar>
            <SocialGroup>
              <SocialButton aria-label="좋아요 0">
                <Icon w={54} h={50} stroke="#fff" width={2}>
                  <path d="M27 48C12 36 2 28 2 16C2 4 20-3 27 11C34-3 52 4 52 16C52 28 42 36 27 48z" />
                </Icon>
                0
              </SocialButton>
              <SocialButton aria-label="댓글 0">
                <Icon w={50} h={50} stroke="#fff" width={2}>
                  <path d="M6 3h38q4 0 4 4v27q0 4-4 4H30l-10 10l-1-10H6q-4 0-4-4V7q0-4 4-4z" />
                </Icon>
                0
              </SocialButton>
            </SocialGroup>
            <IconButton $width={56} aria-label="접기">
              <Icon w={32} h={20} stroke="#fff" width={4}><path d="M3 3l13 13L29 3" /></Icon>
            </IconButton>
          </SocialBar>
          <RideBar>
            <div>
              <RideName>양양읍 &gt; 강현면</RideName>
              <RidePlace>강원도 양양군 양양읍</RidePlace>
            </div>
            <RideDate>2022-10-26 09:40:54</RideDate>
          </RideBar>
        </MapFooter>
      </MapArea>

      <Stats>
        {STATS.map(({ label, amount, unit, wraps }) => (
          <Stat key={label}>
            <StatLabel>{label}</StatLabel>
            <StatValue $wraps={wraps}>
              <Amount>{amount}</Amount>
              {unit && <Unit>{unit}</Unit>}
            </StatValue>
          </Stat>
        ))}
      </Stats>

      <SystemNav>
        <SystemButton aria-label="최근 앱">
          <Icon w={40} h={42} stroke="#8e8e8e" width={4}><path d="M4 3v36M20 3v36M36 3v36" /></Icon>
        </SystemButton>
        <SystemButton aria-label="홈">
          <Icon w={44} h={44} stroke="#8e8e8e"><rect x="3" y="3" width="38" height="38" rx="11" /></Icon>
        </SystemButton>
        <SystemButton aria-label="뒤로 가기">
          <Icon w={24} h={42} stroke="#8e8e8e" width={4}><path d="M21 3L3 21l18 18" /></Icon>
        </SystemButton>
      </SystemNav>
    </Screen>
  );
}
